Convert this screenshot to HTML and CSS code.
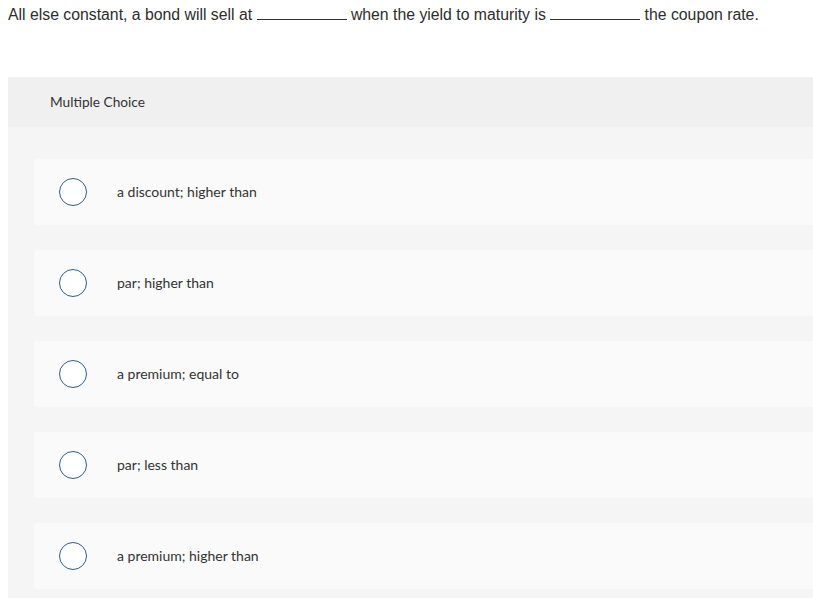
FILE: index.html
```html
<!DOCTYPE html>
<html>
<head>
<meta charset="utf-8">
<link rel="stylesheet" href="styles.css">
</head>
<body>
<p class="question">All else constant, a bond will sell at <span class="blank"></span> when the yield to maturity is <span class="blank"></span> the coupon rate.</p>
<section class="panel">
  <header class="panel-head"><span class="head-text">Multiple Choice</span></header>
  <div class="options">
    <label class="option"><span class="radio"></span><span class="opt-text">a discount; higher than</span></label>
    <label class="option"><span class="radio"></span><span class="opt-text">par; higher than</span></label>
    <label class="option"><span class="radio"></span><span class="opt-text">a premium; equal to</span></label>
    <label class="option"><span class="radio"></span><span class="opt-text">par; less than</span></label>
    <label class="option"><span class="radio"></span><span class="opt-text">a premium; higher than</span></label>
  </div>
</section>
</body>
</html>
```
FILE: styles.css
```css
html, body {
  margin: 0;
  padding: 0;
  background: #ffffff;
  overflow: hidden;
}
body {
  width: 813px;
  height: 598px;
  font-family: "Liberation Sans", Arial, sans-serif;
  color: #333333;
}
.question {
  margin: 0;
  padding: 5px 0 0 8px;
  font-size: 15.8px;
  line-height: 20px;
  color: #2d2d2d;
  white-space: nowrap;
}
.blank {
  display: inline-block;
  width: 90px;
  border-bottom: 1px solid #333;
  vertical-align: baseline;
}
.panel {
  margin: 52px 0 0 8px;
  width: 805px;
  background: #f5f5f5;
  height: 521px;
}
.panel-head {
  background: #f0f0f0;
  height: 50px;
  display: flex;
  align-items: center;
  padding-left: 42px;
  font-family: "Lato", sans-serif;
  font-size: 13.7px;
  color: #333;
}
.head-text {
  margin-top: -2px;
}
.options {
  display: flex;
  flex-direction: column;
  gap: 25px;
  padding: 32px 0 0 26px;
}
.option {
  display: flex;
  align-items: center;
  height: 66px;
  background: #fafafa;
  border-radius: 3px 0 0 3px;
}
.radio {
  width: 26px;
  height: 26px;
  border: 1.5px solid #2f5d8c;
  border-radius: 50%;
  margin-left: 25px;
  background: #fff;
  box-sizing: content-box;
}
.opt-text {
  margin-left: 30px;
  margin-top: -2px;
  font-family: "Lato", sans-serif;
  font-size: 14px;
  color: #333;
}
```
